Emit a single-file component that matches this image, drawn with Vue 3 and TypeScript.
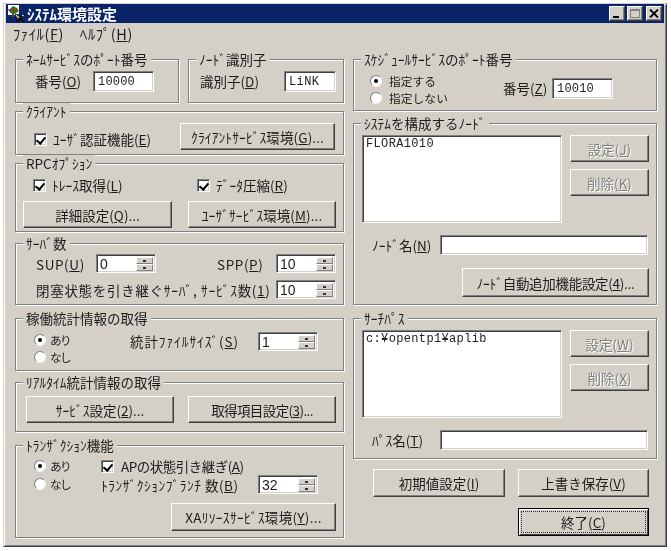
<script setup lang="ts">
const menus = [
  { text: 'ﾌｧｲﾙ(', key: 'F' },
  { text: 'ﾍﾙﾌﾟ(', key: 'H' },
]
</script>

<template>
  <div class="window">
    <header class="titlebar">
      <svg class="app-icon" width="18" height="18" viewBox="0 0 18 18">
        <rect x="1" y="0" width="11" height="10" fill="#fff" />
        <path d="M2 5 L6 1 L10 3 L12 6 L8 9 L3 8 Z" fill="#1c7a2c" />
        <path d="M1 5 H11" stroke="#c8282c" stroke-width="1.4" />
        <path d="M6 8 V12" stroke="#6b4a20" stroke-width="2" />
        <rect x="8" y="9" width="10" height="9" fill="#0a246a" />
        <path d="M9 10 L17 17 M17 10 L9 17" stroke="#111" stroke-width="2" />
        <path d="M9 10 L12 13" stroke="#e8d85a" stroke-width="1.5" />
        <path d="M15 10 L17 11" stroke="#fff" stroke-width="1" />
      </svg>
      <span class="title-text">ｼｽﾃﾑ環境設定</span>
      <div class="caption-buttons">
        <button class="cap">
          <svg width="10" height="9" viewBox="0 0 10 9"><rect x="1" y="7" width="6" height="2" fill="#000" /></svg>
        </button>
        <button class="cap cap-max">
          <svg width="10" height="9" viewBox="0 0 10 9">
            <path d="M0.5 0.5 H9.5 V8.5 H0.5 Z M0.5 1.5 H9.5" fill="none" stroke="#808080" />
          </svg>
        </button>
        <button class="cap cap-close">
          <svg width="10" height="9" viewBox="0 0 10 9"><path d="M1 0.5 L9 8.5 M9 0.5 L1 8.5" stroke="#000" stroke-width="1.8" /></svg>
        </button>
      </div>
    </header>

    <nav class="menubar">
      <span v-for="m in menus" :key="m.key" class="menu-item">{{ m.text }}<u>{{ m.key }}</u>)</span>
    </nav>

    <main class="body">
      <section class="col-left">
        <div class="row-pair">
          <div class="group g-name">
            <span class="legend">ﾈｰﾑｻｰﾋﾞｽのﾎﾟｰﾄ番号</span>
            <label class="lbl lbl-port">番号(<u>O</u>)</label>
            <div class="field mono f-port">10000</div>
          </div>
          <div class="group g-node">
            <span class="legend">ﾉｰﾄﾞ識別子</span>
            <label class="lbl lbl-id">識別子(<u>D</u>)</label>
            <div class="field mono f-id">LiNK</div>
          </div>
        </div>

        <div class="group g-client">
          <span class="legend">ｸﾗｲｱﾝﾄ</span>
          <label class="check c-auth"><i class="box"></i>ﾕｰｻﾞ認証機能(<u>E</u>)</label>
          <button class="btn b-client">ｸﾗｲｱﾝﾄｻｰﾋﾞｽ環境(<u>G</u>)...</button>
        </div>

        <div class="group g-rpc">
          <span class="legend">RPCｵﾌﾟｼｮﾝ</span>
          <div class="rpc-checks">
            <label class="check c-trace"><i class="box"></i>ﾄﾚｰｽ取得(<u>L</u>)</label>
            <label class="check c-comp"><i class="box"></i>ﾃﾞｰﾀ圧縮(<u>R</u>)</label>
          </div>
          <div class="rpc-buttons">
            <button class="btn b-detail">詳細設定(<u>Q</u>)...</button>
            <button class="btn b-user">ﾕｰｻﾞｻｰﾋﾞｽ環境(<u>M</u>)...</button>
          </div>
        </div>

        <div class="group g-server">
          <span class="legend">ｻｰﾊﾞ数</span>
          <div class="server-row">
            <label class="lbl wide lbl-sup">SUP(<u>U</u>)</label>
            <div class="spin s-sup"><span>0</span><i class="spin-btns"><b></b><b></b></i></div>
            <label class="lbl wide lbl-spp">SPP(<u>P</u>)</label>
            <div class="spin"><span>10</span><i class="spin-btns"><b></b><b></b></i></div>
          </div>
          <div class="server-row second">
            <label class="lbl lbl-block">閉塞状態を引き継ぐｻｰﾊﾞ, ｻｰﾋﾞｽ数(<u>1</u>)</label>
            <div class="spin"><span>10</span><i class="spin-btns"><b></b><b></b></i></div>
          </div>
        </div>

        <div class="group g-stats">
          <span class="legend">稼働統計情報の取得</span>
          <div class="radios r-stats">
            <label class="radio short"><i class="dot on"></i>あり</label>
            <label class="radio short"><i class="dot"></i>なし</label>
          </div>
          <label class="lbl lbl-size">統計ﾌｧｲﾙｻｲｽﾞ(<u>S</u>)</label>
          <div class="spin s-size"><span>1</span><i class="spin-btns"><b></b><b></b></i></div>
        </div>

        <div class="group g-real">
          <span class="legend">ﾘｱﾙﾀｲﾑ統計情報の取得</span>
          <button class="btn b-svc">ｻｰﾋﾞｽ設定(<u>2</u>)...</button>
          <button class="btn b-item">取得項目設定(<u>3</u>)...</button>
        </div>

        <div class="group g-tran">
          <span class="legend">ﾄﾗﾝｻﾞｸｼｮﾝ機能</span>
          <div class="tran-top">
            <div class="radios r-tran">
              <label class="radio short"><i class="dot on"></i>あり</label>
              <label class="radio short"><i class="dot"></i>なし</label>
            </div>
            <div class="tran-right">
              <label class="check c-ap"><i class="box"></i>APの状態引き継ぎ(<u>A</u>)</label>
              <div class="tran-branch">
                <label class="lbl lbl-branch">ﾄﾗﾝｻﾞｸｼｮﾝﾌﾞﾗﾝﾁ 数(<u>B</u>)</label>
                <div class="spin s-size"><span>32</span><i class="spin-btns"><b></b><b></b></i></div>
              </div>
            </div>
          </div>
          <button class="btn b-xa">XAﾘｿｰｽｻｰﾋﾞｽ環境(<u>Y</u>)...</button>
        </div>
      </section>

      <section class="col-right">
        <div class="group g-sched">
          <span class="legend">ｽｹｼﾞｭｰﾙｻｰﾋﾞｽのﾎﾟｰﾄ番号</span>
          <div class="radios r-sched">
            <label class="radio"><i class="dot on"></i>指定する</label>
            <label class="radio"><i class="dot"></i>指定しない</label>
          </div>
          <label class="lbl lbl-z">番号(<u>Z</u>)</label>
          <div class="field mono f-port">10010</div>
        </div>

        <div class="group g-nodes">
          <span class="legend">ｼｽﾃﾑを構成するﾉｰﾄﾞ</span>
          <div class="list-row">
            <div class="field mono list">FLORA1010</div>
            <div class="side-buttons">
              <button class="btn side off">設定(<u>J</u>)</button>
              <button class="btn side off">削除(<u>K</u>)</button>
            </div>
          </div>
          <div class="name-row">
            <label class="lbl lbl-name">ﾉｰﾄﾞ名(<u>N</u>)</label>
            <div class="field f-name"></div>
          </div>
          <button class="btn b-auto">ﾉｰﾄﾞ自動追加機能設定(<u>4</u>)...</button>
        </div>

        <div class="group g-path">
          <span class="legend">ｻｰﾁﾊﾟｽ</span>
          <div class="list-row">
            <div class="field mono list">c:¥opentp1¥aplib</div>
            <div class="side-buttons">
              <button class="btn side off">設定(<u>W</u>)</button>
              <button class="btn side off">削除(<u>X</u>)</button>
            </div>
          </div>
          <div class="name-row">
            <label class="lbl lbl-name">ﾊﾟｽ名(<u>T</u>)</label>
            <div class="field f-name"></div>
          </div>
        </div>

        <div class="actions">
          <button class="btn b-init">初期値設定(<u>I</u>)</button>
          <button class="btn b-save">上書き保存(<u>V</u>)</button>
        </div>
        <div class="actions end">
          <button class="btn b-exit"><span class="focus">終了(<u>C</u>)</span></button>
        </div>
      </section>
    </main>
  </div>
</template>

<style>
html, body { margin: 0; background: #fff; }
</style>

<style scoped>
* { box-sizing: border-box; }
.window {
  width: 664px; height: 544px; margin: 3px 0 0 3px;
  background: #d4d0c8;
  border: 1px solid; border-color: #d4d0c8 #404040 #404040 #d4d0c8;
  box-shadow: inset 1px 1px 0 #fff, inset -1px -1px 0 #808080;
  padding: 0 2px 0 2px;
  font: 13.5px/16px "Noto Sans CJK JP", sans-serif;
  color: #1c1c1c;
  filter: blur(0.35px);
}
u { text-underline-offset: 1px; }
.titlebar {
  height: 19px; background: #0a246a; color: #fff;
  display: flex; align-items: center; padding-left: 1px;
}
.app-icon { flex: none; margin-right: 2px; }
.title-text { font-size: 15px; font-weight: 700; }
.caption-buttons { margin-left: auto; display: flex; padding-right: 2px; }
.cap {
  width: 16px; height: 15px; padding: 0; display: flex; align-items: center; justify-content: center;
  background: #d4d0c8; border: 1px solid; border-color: #fff #404040 #404040 #fff;
  box-shadow: inset -1px -1px 0 #808080;
}
.cap-max { margin: 0 2px 0 2px; }
.cap-close { margin-left: 1px; }
.menubar { height: 22px; display: flex; align-items: center; padding-left: 7px; gap: 16px; }
.menu-item { font-size: 14.5px; letter-spacing: 0.6px; }

.body { display: flex; gap: 9px; padding: 14px 0 0 9px; }
.col-left { width: 329px; flex: none; }
.col-right { width: 304px; flex: none; }
.row-pair { display: flex; gap: 9px; }

.group {
  position: relative;
  border: 1px solid #808080;
  box-shadow: 1px 1px 0 #fff, inset 1px 1px 0 #fff;
}
.legend {
  position: absolute; left: 7px; top: -9px; padding: 0 3px;
  background: #d4d0c8; line-height: 16px; white-space: nowrap;
}
.lbl { white-space: nowrap; flex: none; }
.wide { letter-spacing: 0.6px; }

.field {
  background: #fff; border: 1px solid; border-color: #808080 #fff #fff #808080;
  box-shadow: inset 1px 1px 0 #404040, inset -1px -1px 0 #d4d0c8;
  flex: none;
}
.mono {
  font: 12px/16px "Liberation Mono", monospace; letter-spacing: 0.2px; color: #222;
  padding: 2px 0 0 4px;
}
.f-port { width: 61px; height: 21px; }

.btn {
  display: flex; align-items: center; justify-content: center; padding: 0;
  background: #d4d0c8; color: #1c1c1c; font: inherit; white-space: nowrap;
  border: 1px solid; border-color: #fff #404040 #404040 #fff;
  box-shadow: inset -1px -1px 0 #808080;
  flex: none;
}
.off { color: #808080; text-shadow: 1px 1px 0 #fff; }

.check, .radio { display: flex; align-items: center; white-space: nowrap; }
.box {
  width: 13px; height: 13px; flex: none; background: #fff; position: relative; margin-right: 6px;
  border: 1px solid; border-color: #808080 #fff #fff #808080;
  box-shadow: inset 1px 1px 0 #404040, inset -1px -1px 0 #d4d0c8;
}
.box::after {
  content: ""; position: absolute; left: 3px; top: 1px; width: 4px; height: 7px;
  border: solid #000; border-width: 0 2px 2px 0; transform: rotate(40deg);
}
.dot {
  width: 12px; height: 12px; flex: none; border-radius: 50%; background: #fff; position: relative; margin-right: 7px;
  border: 1px solid; border-color: #808080 #f4f4f4 #f4f4f4 #808080;
}
.dot.on::after {
  content: ""; position: absolute; left: 3px; top: 3px; width: 4px; height: 4px; border-radius: 50%; background: #000;
}
.radios { flex: none; }
.radio { height: 17px; font-size: 11.7px; letter-spacing: 0.1px; }
.short { letter-spacing: -1.6px; }
.short .dot { margin-right: 4px; }

.spin {
  width: 60px; height: 19px; background: #fff; display: flex; justify-content: space-between; flex: none;
  border: 1px solid; border-color: #808080 #fff #fff #808080;
  box-shadow: inset 1px 1px 0 #404040, inset -1px -1px 0 #d4d0c8;
  padding: 2px 2px 1px 3px;
  font: 14px/15px "Liberation Sans", sans-serif;
  font-style: normal;
}
.spin-btns { width: 17px; display: flex; flex-direction: column; }
.spin-btns b {
  flex: 1; background: #d4d0c8; position: relative;
  border: 1px solid; border-color: #fff #808080 #808080 #fff;
}
.spin-btns b::after {
  content: ""; position: absolute; left: 6px; top: 2px; width: 3px; height: 2px; background: #333;
}

.g-name { width: 164px; height: 44px; display: flex; align-items: center; }
.lbl-port { margin-left: 19px; width: 58px; }
.g-node { width: 156px; height: 44px; display: flex; align-items: center; }
.lbl-id { margin-left: 11px; width: 84px; }
.f-id { width: 52px; height: 21px; letter-spacing: 0.4px; }

.g-client { margin-top: 8px; height: 44px; display: flex; align-items: flex-start; padding-top: 11px; }
.c-auth { margin: 8px 0 0 18px; width: 146px; }
.b-client { width: 155px; height: 27px; letter-spacing: 0.1px; }

.g-rpc { margin-top: 8px; height: 69px; padding-top: 13px; }
.rpc-checks { display: flex; padding-left: 17px; height: 16px; }
.c-trace { width: 164px; }
.rpc-buttons { display: flex; margin-top: 8px; padding-left: 7px; gap: 16px; }
.b-detail { width: 149px; height: 27px; }
.b-user { width: 148px; height: 27px; letter-spacing: 0.1px; }

.g-server { margin-top: 11px; height: 62px; padding-top: 10px; }
.server-row { display: flex; align-items: center; padding-left: 20px; }
.second { margin-top: 7px; }
.lbl-sup { width: 60px; }
.s-sup { margin-right: 61px; }
.lbl-spp { width: 59px; }
.lbl-block { width: 240px; letter-spacing: 0.7px; }

.g-stats { margin-top: 13px; height: 53px; display: flex; align-items: flex-start; padding-top: 12px; }
.r-stats { margin-left: 18px; width: 96px; }
.lbl-size { width: 128px; margin-top: 2px; letter-spacing: 0.9px; }
.s-size { margin-top: 1px; }

.g-real { margin-top: 11px; height: 50px; display: flex; padding: 13px 0 0 10px; gap: 14px; align-items: flex-start; }
.b-svc, .b-item { width: 148px; height: 27px; }
.b-item { letter-spacing: -0.6px; }

.g-tran { margin-top: 13px; height: 93px; padding-top: 11px; }
.tran-top { display: flex; }
.r-tran { margin-left: 18px; width: 67px; }
.r-tran .radio { height: 18px; }
.c-ap { height: 18px; letter-spacing: -0.5px; }
.c-ap .box { margin-right: 7px; }
.tran-branch { display: flex; align-items: center; }
.lbl-branch { width: 157px; letter-spacing: 0.5px; }
.tran-branch .s-size { margin-top: 0; }
.b-xa { width: 165px; height: 28px; margin: 9px 0 0 155px; letter-spacing: 0.3px; }

.g-sched { height: 52px; display: flex; align-items: flex-start; padding-top: 12px; }
.r-sched { margin-left: 16px; width: 133px; }
.lbl-z { width: 49px; margin-top: 8px; }
.g-sched .f-port { margin-top: 6px; }

.list-row { display: flex; }
.list { width: 200px; height: 88px; padding: 0 0 0 3px; letter-spacing: 0.35px; }
.side-buttons { display: flex; flex-direction: column; gap: 7px; margin-left: 8px; }
.side { width: 79px; height: 27px; }

.g-nodes { margin-top: 12px; height: 182px; padding: 11px 0 0 8px; }
.name-row { display: flex; align-items: center; margin-top: 12px; padding-left: 10px; }
.lbl-name { width: 68px; }
.f-name { width: 208px; height: 20px; }
.b-auto { width: 187px; height: 29px; margin: 13px 0 0 100px; letter-spacing: -0.3px; }

.g-path { margin-top: 13px; height: 141px; padding: 11px 0 0 8px; }

.actions { display: flex; gap: 13px; padding-left: 20px; margin-top: 10px; }
.b-init { width: 132px; height: 28px; }
.b-save { width: 131px; height: 28px; }
.end { margin-top: 11px; padding-left: 165px; }
.b-exit {
  width: 131px; height: 28px; border-color: #000; padding: 2px;
  box-shadow: inset 1px 1px 0 #fff, inset -1px -1px 0 #404040;
}
.focus {
  display: flex; align-items: center; justify-content: center; width: 100%; height: 100%;
  border: 1px dotted #333;
}
</style>
